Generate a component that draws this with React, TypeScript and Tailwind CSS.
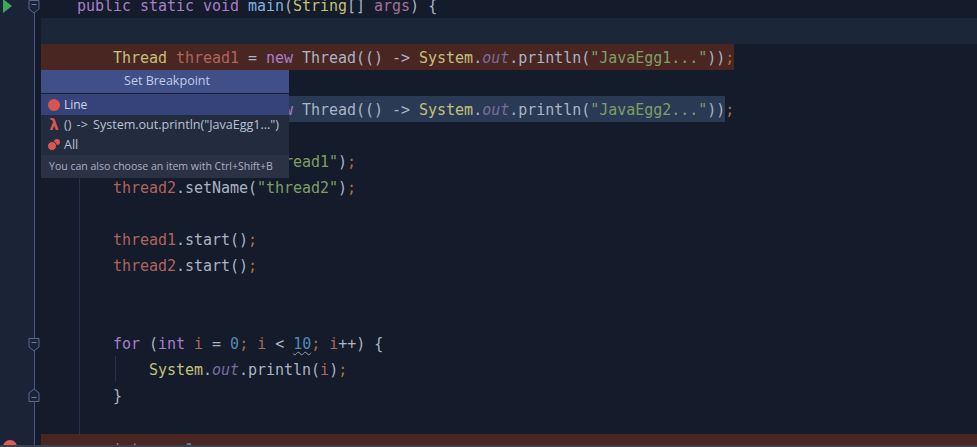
import type { ReactNode } from 'react';

type P = { children: ReactNode };

const Kw = ({ children }: P) => <span className="text-[#a97fc9]">{children}</span>;
const Cls = ({ children }: P) => <span className="text-[#c5c07a]">{children}</span>;
const Var = ({ children }: P) => <span className="text-[#b0645f]">{children}</span>;
const Fn = ({ children }: P) => <span className="text-[#a9b4c4]">{children}</span>;
const Str = ({ children }: P) => <span className="text-[#7d9f63]">{children}</span>;
const Semi = () => <span className="text-[#b0713a]">;</span>;
const Out = () => <span className="italic text-[#7a6b9c]">out</span>;
const Num = ({ children }: P) => <span className="text-[#5587b5]">{children}</span>;

function FoldMark({ up }: { up?: boolean }) {
  return (
    <svg width="12" height="15" viewBox="0 0 12 15" className={up ? 'relative z-10 -mr-[6px] mt-[1px] rotate-180' : 'relative z-10 -mr-[6px] mt-[3px]'}>
      <path d="M1 1.5h10v8.5l-5 4-5-4z" fill="#1b2436" stroke="#59678f" />
      <path d="M3.5 5.5h5" stroke="#6f7d9f" />
    </svg>
  );
}

function Row({ children, gutter, tone, full = true }: { children?: ReactNode; gutter?: ReactNode; tone?: string; full?: boolean }) {
  return (
    <div className="flex h-[26px] shrink-0">
      <div className="flex h-[26px] w-[35px] shrink-0 items-center justify-end border-r border-[#46558a] bg-[#1b2436]">{gutter}</div>
      <div className={`ml-[6px] h-[26px] whitespace-pre pl-[36px] leading-[28px] ${full ? 'flex-1' : 'w-[693px]'} ${tone ?? ''}`}>{children}</div>
    </div>
  );
}

function SetBreakpointPopup() {
  return (
    <div className="absolute left-[41px] top-[70px] z-20 flex w-[248px] flex-col bg-[#232b3f] text-[#b9c2d4] [font-family:'Open_Sans',sans-serif]">
      <div className="flex h-[24px] items-center justify-center border-b border-[#1a2030] bg-[#404f88] pl-[4px] text-[12.6px] text-[#c3cbe0]">Set Breakpoint</div>
      <div className="flex h-[21px] items-center gap-[4px] bg-[#36437a] pl-[7px] text-[12px] text-[#d0d6e6]">
        <span className="h-[12px] w-[12px] rounded-full bg-[#d9534f]" />
        <span>Line</span>
      </div>
      <div className="flex h-[20px] items-center gap-[4px] pl-[7px] text-[12.6px]">
        <span className="w-[12px] text-center text-[15px] font-bold leading-none text-[#d9574f] [font-family:'DejaVu_Sans',sans-serif]">λ</span>
        <span className="[word-spacing:2px]">() -&gt; System.out.println("JavaEgg1...")</span>
      </div>
      <div className="flex h-[20px] items-center gap-[4px] pl-[7px] text-[12.6px]">
        <svg width="12" height="12" viewBox="0 0 12 12">
          <circle cx="9" cy="3" r="3" fill="#d9574f" />
          <circle cx="4" cy="7" r="4.5" fill="#d9574f" stroke="#232b3f" />
        </svg>
        <span>All</span>
      </div>
      <div className="flex h-[23px] items-center bg-[#2b3244] pl-[8px] text-[10.6px] text-[#a7b0c2]">You can also choose an item with Ctrl+Shift+B</div>
    </div>
  );
}

export default function App() {
  return (
    <div className="flex h-[447px] w-[977px] flex-col overflow-hidden border-b-2 border-[#3a4252] bg-[#141b2a] text-[15px] tracking-[-0.03px] text-[#a9b4c4] [font-family:'DejaVu_Sans_Mono',monospace]">
      <div className="relative flex-1 overflow-hidden">
        {/* indent guides */}
        <div className="absolute bottom-0 left-[79px] top-[18px] w-px bg-[#27314a]" />
        <div className="absolute left-[115px] top-[356px] h-[26px] w-px bg-[#27314a]" />

        <SetBreakpointPopup />

        <div className="relative -mt-[8px] flex flex-col">
          <Row
            gutter={
              <>
                <svg width="11" height="14" viewBox="0 0 11 14" className="absolute left-[2px] top-[7px]">
                  <path d="M1 0l9 7-9 7z" fill="#3fa75a" />
                </svg>
                <FoldMark />
              </>
            }
          >
            <Kw>public static void</Kw> <span className="text-[#7fb2e0]">main</span>(<Cls>String</Cls>[] <span className="text-[#a5719f]">args</span>) {'{'}
          </Row>
          <Row tone="bg-[#1c2639]" />
          <Row tone="bg-[#4a2622]" full={false}>
            {'    '}<Cls>Thread</Cls> <Var>thread1</Var> = <Kw>new</Kw> Thread(() -&gt; <Cls>System</Cls>.<Out />.<Fn>println</Fn>(<Str>"JavaEgg1..."</Str>))<Semi />
          </Row>
          <Row />
          <Row>
            {'    '}
            <span className="inline-block h-[26px] bg-[#2a3a55]">
              <Cls>Thread</Cls> <Var>thread2</Var> = <Kw>new</Kw> Thread(() -&gt; <Cls>System</Cls>.<Out />.<Fn>println</Fn>(<Str>"JavaEgg2..."</Str>))
            </span>
            <Semi />
          </Row>
          <Row />
          <Row>
            {'    '}<Var>thread1</Var>.setName(<Str>"thread1"</Str>)<Semi />
          </Row>
          <Row>
            {'    '}<Var>thread2</Var>.setName(<Str>"thread2"</Str>)<Semi />
          </Row>
          <Row />
          <Row>
            {'    '}<Var>thread1</Var>.start()<Semi />
          </Row>
          <Row>
            {'    '}<Var>thread2</Var>.start()<Semi />
          </Row>
          <Row />
          <Row />
          <Row gutter={<FoldMark />}>
            {'    '}<Kw>for</Kw> (<Kw>int</Kw> <Var>i</Var> = <Num>0</Num><Semi /> <Var>i</Var> &lt; <span className="text-[#5587b5] underline decoration-[#8fa3b5] decoration-wavy decoration-1 underline-offset-2">10</span><Semi /> <Var>i</Var>++) {'{'}
          </Row>
          <Row>
            {'        '}<Cls>System</Cls>.<Out />.<Fn>println</Fn>(<Var>i</Var>)<Semi />
          </Row>
          <Row gutter={<FoldMark up />}>{'    }'}</Row>
          <Row />
          <Row
            tone="bg-[#4a2622] pt-[2px]"
            gutter={<span className="absolute left-[3px] top-[448px] h-[14px] w-[14px] rounded-full bg-[#d9604f]" />}
          >
            {'    '}<Kw>int</Kw> <Var>a</Var> = <Num>1</Num><Semi />
          </Row>
        </div>
      </div>
    </div>
  );
}
